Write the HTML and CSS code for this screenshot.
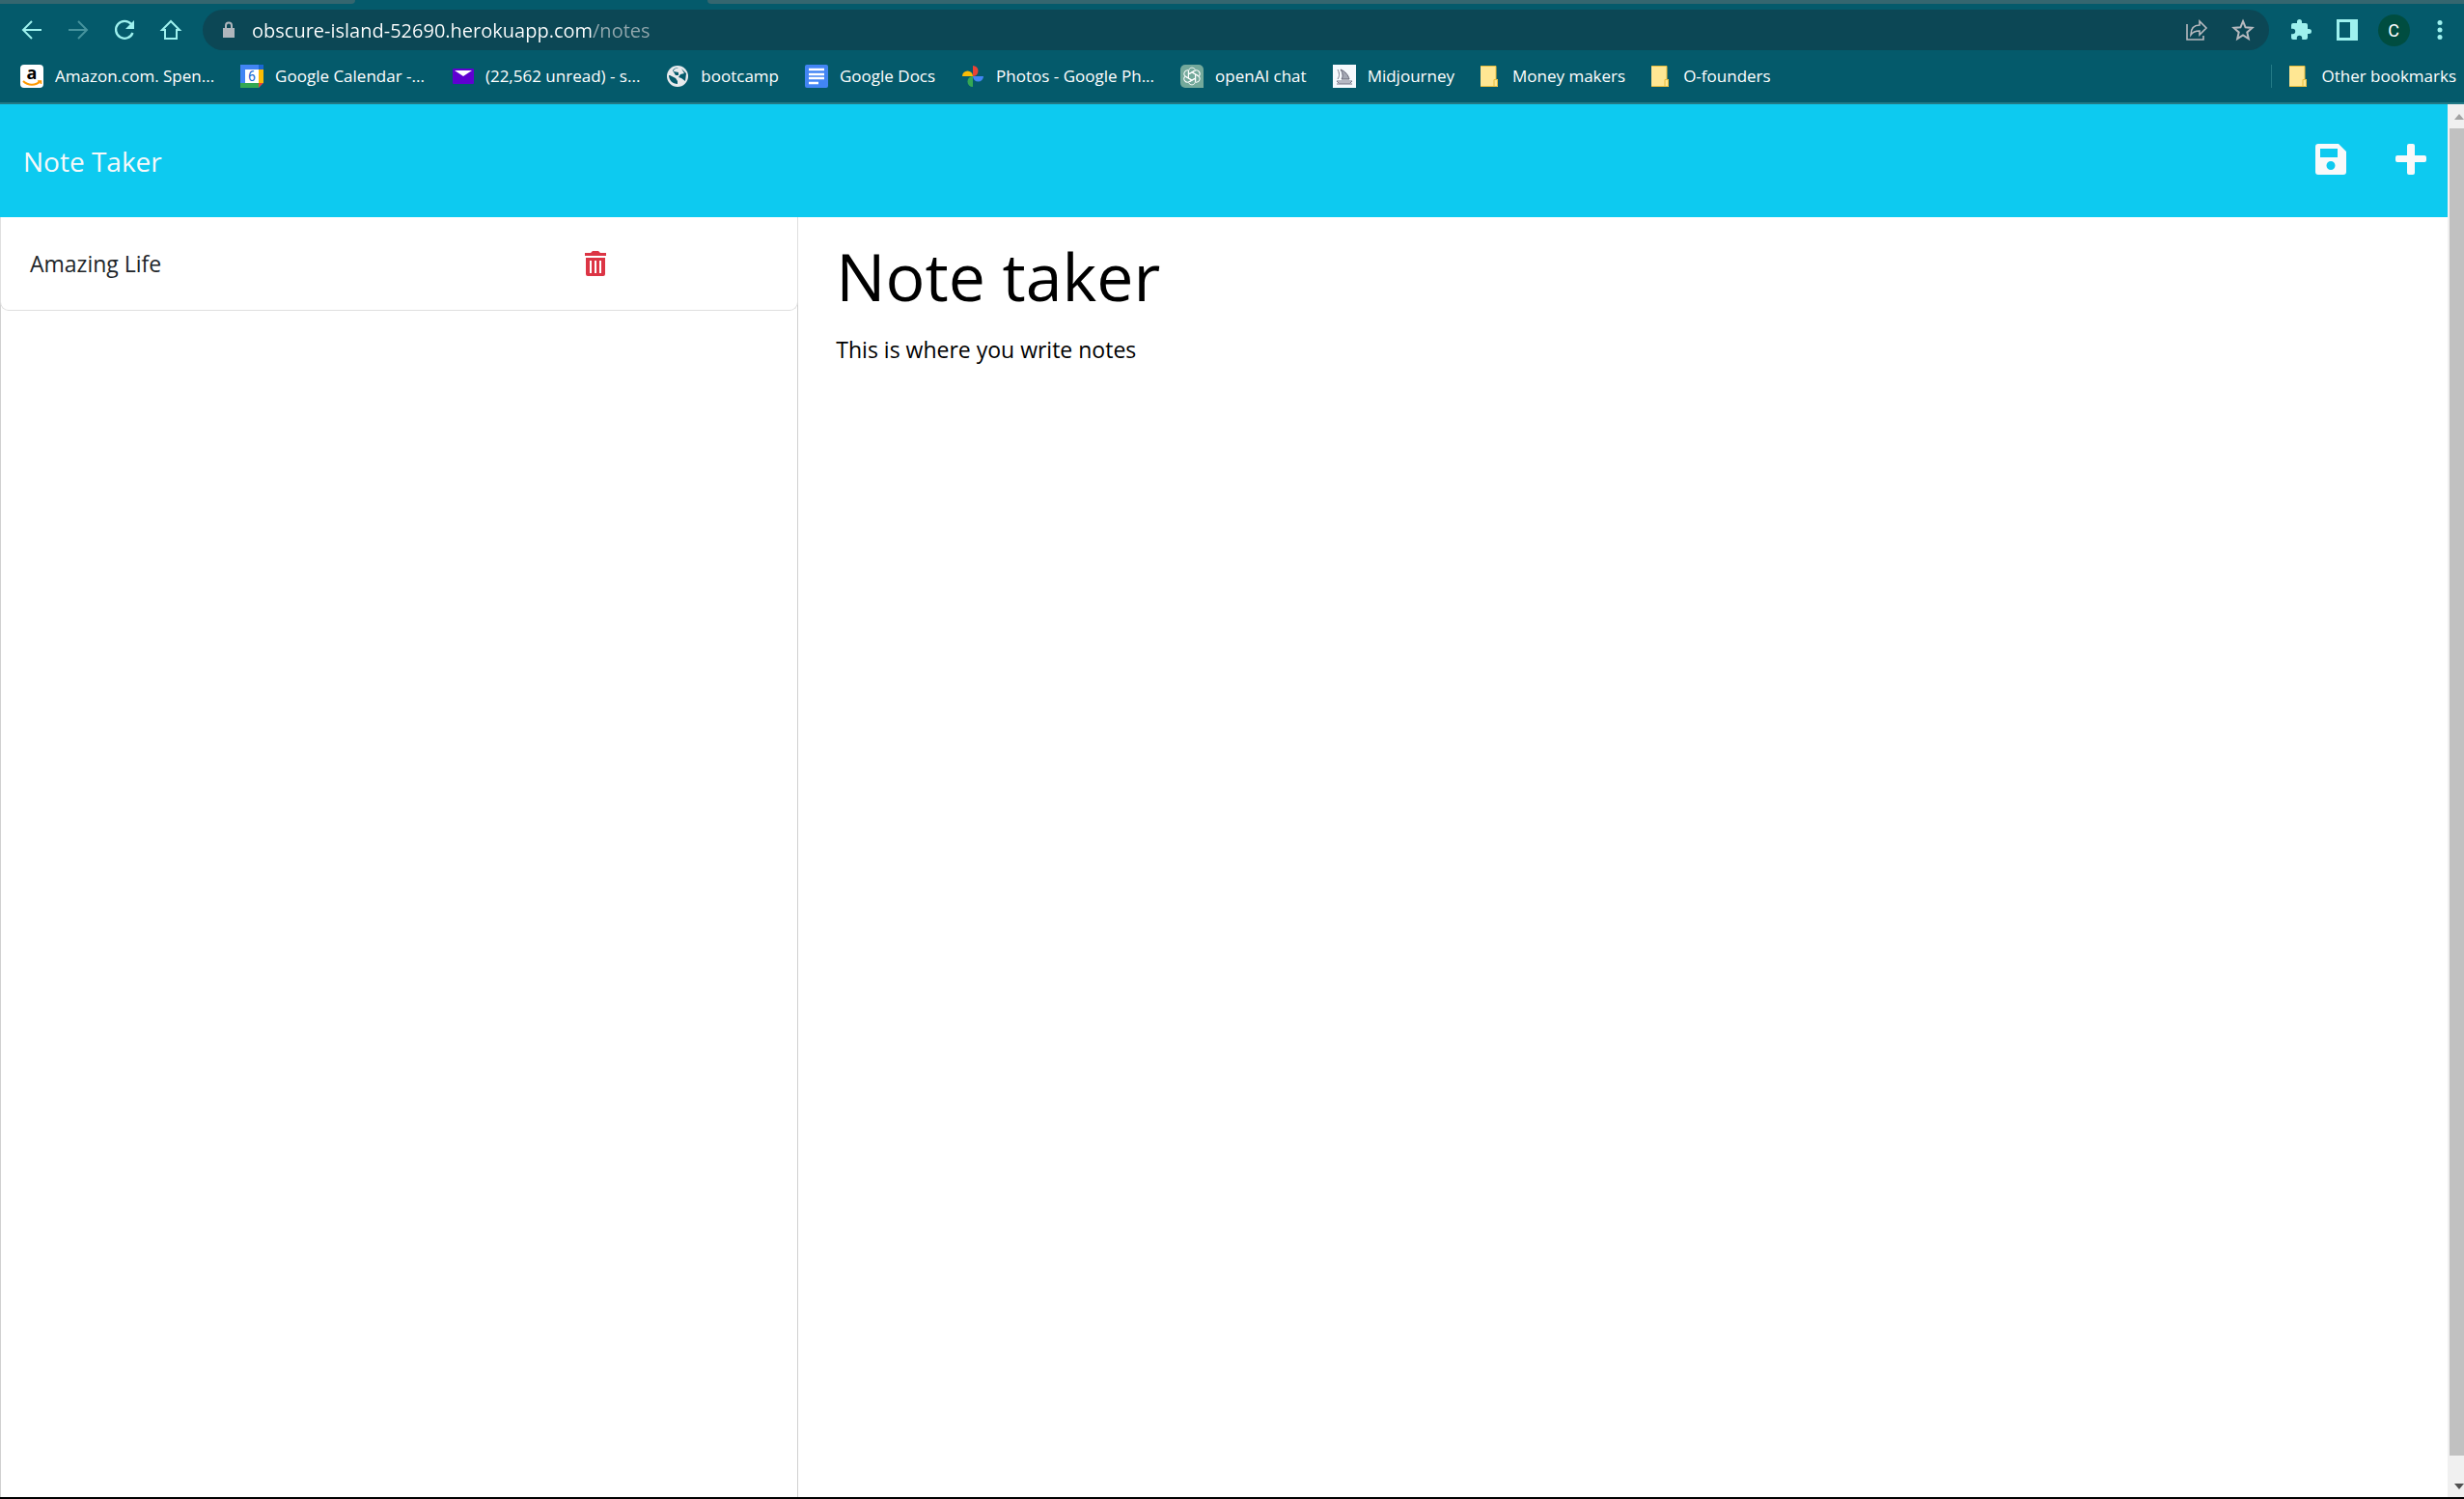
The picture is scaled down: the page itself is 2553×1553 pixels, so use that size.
FILE: index.html
```html
<!DOCTYPE html>
<html lang="en">
<head>
<meta charset="utf-8">
<title>Note Taker</title>
<link rel="stylesheet" href="styles.css">
</head>
<body>
<div class="browser">
  <div class="tab-strip"><span class="tab-left"></span><span class="tab-right"></span></div>
  <div class="toolbar">
    <div class="tools">
      <button class="tool" aria-label="Back"><svg width="24" height="24" viewBox="0 0 24 24"><path d="M22 12H3M12 3l-9 9 9 9" fill="none" stroke="currentColor" stroke-width="2"/></svg></button>
      <button class="tool dim" aria-label="Forward"><svg width="24" height="24" viewBox="0 0 24 24"><path d="M2 12h19M12 3l9 9-9 9" fill="none" stroke="currentColor" stroke-width="2"/></svg></button>
      <button class="tool" aria-label="Reload"><svg width="24" height="24" viewBox="0 0 24 24"><path d="M20.500 15A9 9 0 1 1 19 6" fill="none" stroke="currentColor" stroke-width="2.300"/><path d="M22 2v9h-9z" fill="currentColor"/></svg></button>
      <button class="tool" aria-label="Home"><svg width="24" height="24" viewBox="0 0 24 24"><path d="M3 12l9-9 9 9h-3v9H6v-9z" fill="none" stroke="currentColor" stroke-width="2"/></svg></button>
    </div>
    <div class="omnibox">
      <svg class="lock" width="14" height="18" viewBox="0 0 14 18"><path d="M1 7h12v10H1z" fill="currentColor"/><path d="M4 8V4.500a3 3 0 0 1 6 0V8" fill="none" stroke="currentColor" stroke-width="2"/></svg>
      <input class="url" type="text" aria-label="Address" value="obscure-island-52690.herokuapp.com/notes">
      <button class="tool grey" aria-label="Share"><svg width="24" height="24" viewBox="0 0 24 24"><path d="M2 6v16h17v-4M6 17c0-7 4-10 9-10V3l7 7-7 7v-4c-4 0-7 1-9 4z" fill="none" stroke="currentColor" stroke-width="1.600"/></svg></button>
      <button class="tool grey" aria-label="Bookmark this page"><svg width="24" height="24" viewBox="0 0 24 24"><path d="M12 3l2.600 6.300 6.900.6-5.200 4.500 1.500 6.700L12 17.500l-5.800 3.600 1.500-6.700L2.500 9.900l6.900-.6z" fill="none" stroke="currentColor" stroke-width="2"/></svg></button>
    </div>
    <div class="tools">
      <button class="tool" aria-label="Extensions"><svg width="24" height="24" viewBox="0 0 24 24"><path d="M20.500 11H19V7a2 2 0 0 0-2-2h-4V3.500a2.500 2.500 0 0 0-5 0V5H4a2 2 0 0 0-2 2v3.800h1.500a2.700 2.700 0 0 1 0 5.400H2V20a2 2 0 0 0 2 2h3.800v-1.500a2.700 2.700 0 0 1 5.400 0V22H17a2 2 0 0 0 2-2v-4h1.500a2.500 2.500 0 0 0 0-5z" fill="currentColor"/></svg></button>
      <button class="tool" aria-label="Side panel"><svg width="22" height="22" viewBox="0 0 22 22"><path d="M0 0h22v22H0zM3 3v16h11V3z" fill="currentColor" fill-rule="evenodd"/></svg></button>
      <button class="tool" aria-label="Profile"><span class="avatar">C</span></button>
      <button class="tool" aria-label="Menu"><svg width="24" height="24" viewBox="0 0 24 24"><g fill="currentColor"><circle cx="12" cy="4.500" r="2.500"/><circle cx="12" cy="12" r="2.500"/><circle cx="12" cy="19.500" r="2.500"/></g></svg></button>
    </div>
  </div>
  <nav class="bookmarks" aria-label="Bookmarks">
    <a class="bookmark" href="#"><svg class="amazon" width="24" height="24" viewBox="0 0 24 24"><rect width="24" height="24" rx="4" fill="#fff"/><text x="12" y="15" text-anchor="middle" class="amazon-a">a</text><path d="M3 17c5 5 13 5 18 0" fill="none" stroke="#f90" stroke-width="2"/><path d="M18 17h3.500v3" fill="none" stroke="#f90" stroke-width="1.500"/></svg>Amazon.com. Spen...</a>
    <a class="bookmark" href="#"><svg width="24" height="24" viewBox="0 0 24 24"><path d="M0 0h24v24H0z" fill="#4285f4"/><path d="M19 5h5v14h-5z" fill="#fbbc04"/><path d="M19 0h5v5h-5z" fill="#1967d2"/><path d="M0 19h19v5H0z" fill="#34a853"/><path d="M19 19h5l-5 5z" fill="#ea4335"/><path d="M24 19v5h-5z" fill="#045a6b"/><path d="M5 5h14v14H5z" fill="#fff"/><text x="12" y="17" text-anchor="middle" class="day">6</text></svg>Google Calendar -...</a>
    <a class="bookmark" href="#"><svg width="24" height="24" viewBox="0 0 24 24"><rect x="2" y="4" width="22" height="16" rx="1" fill="#5f01d1"/><path d="M4 6h18l-9 6z" fill="#fff"/></svg>(22,562 unread) - s...</a>
    <a class="bookmark" href="#"><svg width="24" height="24" viewBox="0 0 24 24"><circle cx="12" cy="12" r="11" fill="#e8eaed"/><path d="M13 3c-4 1-5 2-5 4l5 1v3H4l6 3 2 3v3c-5 0-9-4-9-9l7 0-3-5c2-3 4-3 6-3zM16 4l5 5-1 8-4-3-3-1 2-3 4-1z" fill="#045a6b"/></svg>bootcamp</a>
    <a class="bookmark" href="#"><svg width="24" height="24" viewBox="0 0 24 24"><rect width="24" height="24" rx="2" fill="#4285f4"/><path d="M4 5h16M4 10h16M4 14h16M4 19h10" stroke="#fff" stroke-width="2.500"/></svg>Google Docs</a>
    <a class="bookmark" href="#"><svg width="24" height="24" viewBox="0 0 24 24"><path d="M12 1a5.500 5.500 0 0 1 0 11z" fill="#ea4335"/><path d="M23 12a5.500 5.500 0 0 1-11 0z" fill="#4285f4"/><path d="M12 23a5.500 5.500 0 0 1 0-11z" fill="#34a853"/><path d="M1 12a5.500 5.500 0 0 1 11 0z" fill="#fbbc04"/></svg>Photos - Google Ph...</a>
    <a class="bookmark" href="#"><svg width="24" height="24" viewBox="0 0 24 24"><path d="M5 0h14a5 5 0 0 1 5 5v19H5a5 5 0 0 1-5-5V5a5 5 0 0 1 5-5z" fill="#74a99b"/><g fill="none" stroke="#fff" stroke-width="1"><path id="petal" d="M8.500 14V7c0-4.500 5.500-5 7-1.500M11.800 16.200L5.600 12.600"/><use href="#petal" transform="rotate(60 12 12)"/><use href="#petal" transform="rotate(120 12 12)"/><use href="#petal" transform="rotate(180 12 12)"/><use href="#petal" transform="rotate(240 12 12)"/><use href="#petal" transform="rotate(300 12 12)"/></g></svg>openAI chat</a>
    <a class="bookmark" href="#"><svg width="24" height="24" viewBox="0 0 24 24"><path d="M0 0h24v24H0z" fill="#f5f9fd"/><path d="M9 15c2-3 1-7-1-10 5 2 8 6 9 10z" fill="#a4a8b4" stroke="#667" stroke-width="1"/><path d="M5 5c2 4 2 7 0 10M4 17h16l-2 2H6zM4 20h16" fill="none" stroke="#778" stroke-width="1"/></svg>Midjourney</a>
    <a class="bookmark folder" href="#"><svg width="18" height="24" viewBox="3 0 18 24"><path d="M3 1h16v14h2v8H3z" fill="#ffe793"/><path d="M3 1.500h16V15M3 22.500h17.500V15.500H17V22" fill="none" stroke="#e8bd3c"/></svg>Money makers</a>
    <a class="bookmark folder" href="#"><svg width="18" height="24" viewBox="3 0 18 24"><path d="M3 1h16v14h2v8H3z" fill="#ffe793"/><path d="M3 1.500h16V15M3 22.500h17.500V15.500H17V22" fill="none" stroke="#e8bd3c"/></svg>O-founders</a>
    <a class="bookmark folder other" href="#"><svg width="18" height="24" viewBox="3 0 18 24"><path d="M3 1h16v14h2v8H3z" fill="#ffe793"/><path d="M3 1.500h16V15M3 22.500h17.500V15.500H17V22" fill="none" stroke="#e8bd3c"/></svg>Other bookmarks</a>
  </nav>
</div>
<div class="viewport">
  <div class="page">
    <header class="navbar">
      <a class="brand" href="#">Note Taker</a>
      <div class="actions">
        <button class="action" aria-label="Save note"><svg width="34" height="34" viewBox="0 0 34 34"><path d="M4 1h21l8 8v21a3 3 0 0 1-3 3H4a3 3 0 0 1-3-3V4a3 3 0 0 1 3-3zM6 6v9h18V6zM17 19a4.500 4.500 0 1 0 0 9 4.500 4.500 0 0 0 0-9z" fill="currentColor" fill-rule="evenodd"/></svg></button>
        <button class="action" aria-label="New note"><svg width="34" height="34" viewBox="0 0 34 34"><path d="M15 1h4a2 2 0 0 1 2 2v10h10a2 2 0 0 1 2 2v3a2 2 0 0 1-2 2H21v11a2 2 0 0 1-2 2h-4a2 2 0 0 1-2-2V20H3a2 2 0 0 1-2-2v-3a2 2 0 0 1 2-2h10V3a2 2 0 0 1 2-2z" fill="currentColor"/></svg></button>
      </div>
    </header>
    <div class="columns">
      <aside class="sidebar">
        <ul class="notes">
          <li class="note">
            <span>Amazing Life</span>
            <button class="delete" aria-label="Delete note"><svg width="24" height="26" viewBox="0 0 24 26"><path d="M1 2h6l2-2h6l2 2h6v3H1zM2 7h20v17a2 2 0 0 1-2 2H4a2 2 0 0 1-2-2zM6 10v13h2V10zM11 10v13h2V10zM16 10v13h2V10z" fill="currentColor" fill-rule="evenodd"/></svg></button>
          </li>
        </ul>
      </aside>
      <main class="editor">
        <h1 class="title">Note taker</h1>
        <p class="text">This is where you write notes</p>
      </main>
    </div>
  </div>
  <div class="scrollbar" aria-hidden="true">
    <svg class="up" width="10" height="6" viewBox="0 0 10 6"><path d="M0 6l5-6 5 6z" fill="currentColor"/></svg>
    <span class="thumb"></span>
    <svg class="down" width="10" height="6" viewBox="0 0 10 6"><path d="M0 0h10L5 6z" fill="currentColor"/></svg>
  </div>
</div>
</body>
</html>
```
FILE: styles.css
```css
* { box-sizing: border-box; }
body {
  margin: 0;
  min-height: 100vh;
  display: flex;
  flex-direction: column;
  border-bottom: 2px solid #000;
  background: #fff;
  color: #212529;
  font-family: "Open Sans", sans-serif;
  font-size: 23px;
}
button { padding: 0; border: 0; background: none; color: inherit; font: inherit; }
a { color: inherit; text-decoration: none; }
svg { display: block; flex: none; }

.browser { height: 108px; background: #045a6b; border-bottom: 2px solid #237a86; }
.tab-strip { display: flex; justify-content: space-between; height: 4px; margin-bottom: 6px; }
.tab-left { width: 368px; background: #35666f; border-bottom-right-radius: 4px; }
.tab-right { width: calc(100% - 733px); background: #35666f; border-bottom-left-radius: 4px; }

.toolbar { display: flex; gap: 9px; height: 42px; padding: 0 1px 0 9px; }
.tools { display: flex; }
.tool { display: flex; align-items: center; justify-content: center; width: 48px; height: 42px; color: #9ef1ee; }
.dim { color: #46939d; }
.grey { color: #b7babf; }
.omnibox { display: flex; flex: 1; align-items: center; padding: 0 3px 0 20px; border-radius: 21px; background: #0c4755; }
.lock { color: #b0b6bc; }
.url {
  flex: 1;
  height: 42px;
  margin-left: 17px;
  padding: 0;
  border: 0;
  background: linear-gradient(to right, #fff 352px, #93a8ae 352px);
  -webkit-background-clip: text;
  background-clip: text;
  -webkit-text-fill-color: transparent;
  color: #fff;
  font: 20px "Open Sans", sans-serif;
}
.avatar { width: 33px; height: 33px; border-radius: 50%; background: #004d40; color: #fff; font: 18px/33px Roboto, sans-serif; text-align: center; }

.bookmarks { display: flex; gap: 27px; height: 54px; padding: 0 8px 0 21px; align-items: center; color: #fff; font-size: 17px; white-space: nowrap; }
.bookmark { display: flex; align-items: center; gap: 12px; height: 24px; line-height: 24px; }
.folder { gap: 15px; }
.other { margin-left: auto; padding-left: 18px; border-left: 1px solid #237a86; }
.amazon { overflow: visible; }
.amazon-a { font: bold 18px "Open Sans", sans-serif; fill: #000; }
.day { font: 14px Roboto, sans-serif; fill: #1967d2; }

.viewport { display: flex; flex: 1; }
.page { display: flex; flex: 1; flex-direction: column; }
.navbar { display: flex; align-items: center; justify-content: space-between; height: 117px; padding: 0 21px 0 24px; background: #0dcaf0; color: #f8f9fa; }
.brand { font-size: 28px; }
.actions { display: flex; gap: 49px; padding-bottom: 4px; }
.columns { display: flex; flex: 1; }
.sidebar { width: calc(33.333% - 18px); border: 1px solid #d0d0d0; border-width: 0 1px; }
.notes { margin: 0 -1px; padding: 0; list-style: none; }
.note { display: grid; grid-template-columns: 3fr 1fr; align-items: center; height: 97px; padding: 0 30px; border: 1px solid #dfdfdf; border-top: 0; border-radius: 0 0 9px 9px; }
.delete { justify-self: start; color: #dc3545; }
.editor { flex: 1; padding: 16px 39px; color: #000; }
.title { margin: 0 0 12px; font-size: 68px; font-weight: 400; line-height: 90px; }
.text { margin: 0; line-height: 38px; }

.scrollbar { display: flex; flex-direction: column; align-items: flex-end; width: 17px; background: #f0f0f0; }
.up { margin: 10px 0 9px; color: #a3a3a3; }
.thumb { flex: 1; width: 15px; background: #c1c1c1; }
.down { margin: 29px 0 8px; color: #505050; }
```
